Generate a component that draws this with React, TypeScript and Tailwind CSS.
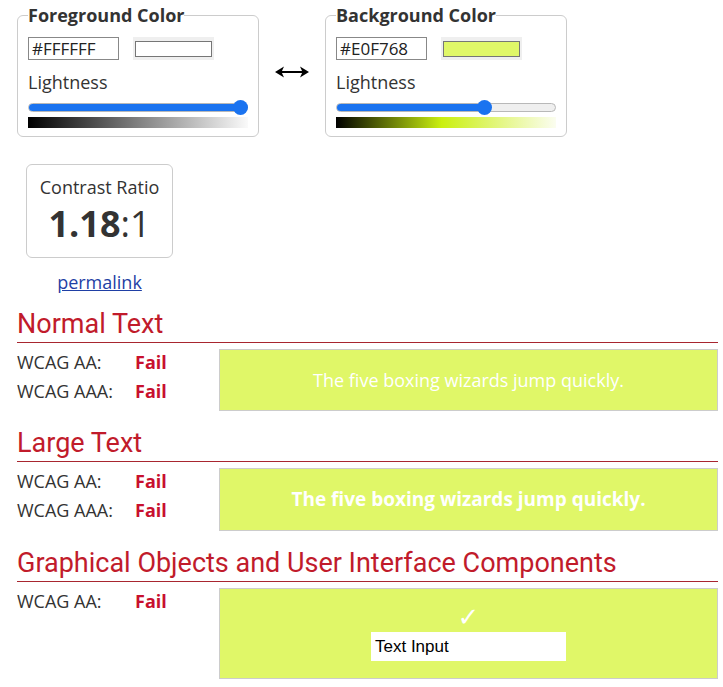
import React from "react";

const body = { fontFamily: '"Open Sans", "DejaVu Sans", sans-serif' };
const head = { fontFamily: 'Roboto, "Open Sans", sans-serif' };

function Slider({ pos, full }: { pos: number; full: boolean }) {
  return (
    <div className="relative mt-[6px] flex h-[15px] w-[220px] items-center">
      <div className="relative h-[9px] w-full overflow-hidden rounded-full border border-[#b8b8b8] bg-[#efefef]">
        <div
          className={full ? "h-full w-full bg-[#1a73f0]" : "h-full bg-[#1a73f0]"}
          style={full ? undefined : { width: pos + "px" }}
        />
      </div>
      <div
        className="absolute top-0 h-[15px] w-[15px] rounded-full bg-[#1a73f0]"
        style={{ left: pos - 7.5 + "px" }}
      />
    </div>
  );
}

function ColorPanel({
  title,
  hex,
  color,
  pos,
  full,
  gradient,
}: {
  title: string;
  hex: string;
  color: string;
  pos: number;
  full: boolean;
  gradient: string;
}) {
  return (
    <fieldset className="w-[242px] rounded-[6px] border border-[#cccccc] px-[10px] pb-[8px]">
      <legend className="text-[18px] font-bold leading-[24px] text-[#333333]">{title}</legend>
      <div className="mt-[10px] flex items-center">
        <div className="flex h-[23px] w-[91px] items-center border border-[#888888] pl-[3px] text-[17px] text-[#222222]">
          {hex}
        </div>
        <div className="ml-[14px] flex h-[23px] w-[81px] items-center bg-[#efefef] px-[2px]">
          <div className="h-[16px] w-full border border-[#767676]" style={{ background: color }} />
        </div>
      </div>
      <div className="mt-[10px] text-[18px] leading-[24px] text-[#333333]">Lightness</div>
      <Slider pos={pos} full={full} />
      <div className="mt-[2px] h-[11px] w-[220px]" style={{ background: gradient }} />
    </fieldset>
  );
}

function Heading({ children }: { children: React.ReactNode }) {
  return (
    <h2
      className="border-b border-[#a8262f] pb-[3px] text-[27px] leading-[30px] text-[#c11b2b]"
      style={head}
    >
      {children}
    </h2>
  );
}

function Rows({ aaa }: { aaa: boolean }) {
  return (
    <div className="mt-[5px] w-[202px] shrink-0 text-[18px] leading-[29px] text-[#333333]">
      <div className="flex">
        <span className="w-[118px]">WCAG AA:</span>
        <span className="font-bold text-[#c8102e]">Fail</span>
      </div>
      {aaa && (
        <div className="flex">
          <span className="w-[118px]">WCAG AAA:</span>
          <span className="font-bold text-[#c8102e]">Fail</span>
        </div>
      )}
    </div>
  );
}

function Arrow() {
  return (
    <svg width="34" height="14" viewBox="0 0 34 14" aria-hidden="true">
      <line x1="5" y1="7" x2="29" y2="7" stroke="#000" strokeWidth="2" />
      <path d="M0 7 L9 1.5 L6.5 7 L9 12.5 Z" fill="#000" />
      <path d="M34 7 L25 1.5 L27.5 7 L25 12.5 Z" fill="#000" />
    </svg>
  );
}

export default function App() {
  return (
    <div className="min-h-[687px] bg-white pl-[17px] pr-[5px] pt-[3px]" style={body}>
      <div className="flex items-center">
        <ColorPanel
          title="Foreground Color"
          hex="#FFFFFF"
          color="#FFFFFF"
          pos={212}
          full={true}
          gradient="linear-gradient(to right, #000000, #808080, #fafafa)"
        />
        <div className="flex w-[66px] justify-center pt-[4px]">
          <Arrow />
        </div>
        <ColorPanel
          title="Background Color"
          hex="#E0F768"
          color="#E0F768"
          pos={148}
          full={false}
          gradient="linear-gradient(to right, #000000, hsl(70, 88%, 50%) 48%, #fbfdf0)"
        />
      </div>

      <div className="ml-[9px] mt-[27px] flex w-[147px] flex-col items-center">
        <div className="flex h-[94px] w-[147px] flex-col items-center rounded-[6px] border border-[#cccccc] pt-[10px]">
          <div className="text-[18px] leading-[24px] text-[#333333]">Contrast Ratio</div>
          <div className="mt-[4px] text-[36px] leading-[42px] text-[#333333]">
            <span className="font-bold">1.18</span>
            <span>:1</span>
          </div>
        </div>
        <a className="mt-[12px] text-[18px] leading-[24px] text-[#1f3fa5] underline" href="#">
          permalink
        </a>
      </div>

      <div className="mt-[15px]">
        <Heading>Normal Text</Heading>
        <div className="flex items-start">
          <Rows aaa={true} />
          <div className="mt-[6px] flex h-[62px] flex-1 items-center justify-center border border-[#cccccc] bg-[#E0F768] text-[18px] text-white">
            The five boxing wizards jump quickly.
          </div>
        </div>
      </div>

      <div className="mt-[17px]">
        <Heading>Large Text</Heading>
        <div className="flex items-start">
          <Rows aaa={true} />
          <div className="mt-[6px] flex h-[63px] flex-1 items-center justify-center border border-[#cccccc] bg-[#E0F768] text-[19px] font-bold text-white">
            The five boxing wizards jump quickly.
          </div>
        </div>
      </div>

      <div className="mt-[17px]">
        <Heading>Graphical Objects and User Interface Components</Heading>
        <div className="flex items-start">
          <Rows aaa={false} />
          <div className="mt-[6px] flex h-[91px] flex-1 flex-col items-center border border-[#cccccc] bg-[#E0F768] pt-[15px]">
            <div
              className="text-[26px] leading-[26px] text-white"
              style={{ fontFamily: '"DejaVu Sans", sans-serif' }}
            >
              ✓
            </div>
            <div
              className="mt-[2px] flex h-[29px] w-[195px] items-center bg-white pl-[4px] text-[17px] text-black"
              style={{ fontFamily: '"Liberation Sans", Arial, sans-serif' }}
            >
              Text Input
            </div>
          </div>
        </div>
      </div>
    </div>
  );
}
